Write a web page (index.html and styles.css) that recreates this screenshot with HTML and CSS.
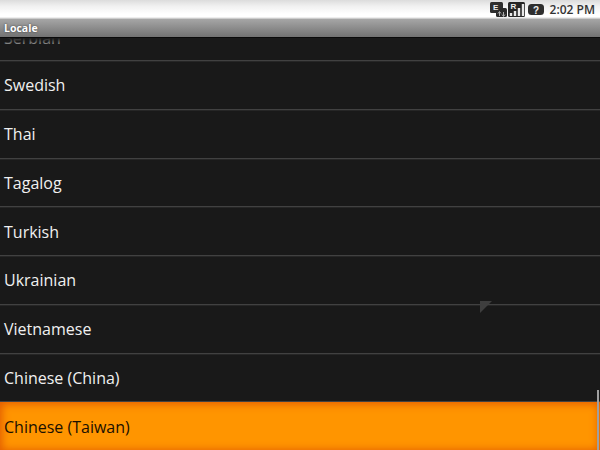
FILE: index.html
```html
<!DOCTYPE html>
<html lang="en">
<head>
<meta charset="utf-8">
<title>Locale</title>
<link rel="stylesheet" href="styles.css">
</head>
<body>
<div class="screen">
  <header class="status">
    <svg class="ico" width="17" height="15" viewBox="0 0 17 15"><rect x="0" y="0" width="13" height="11" rx="1.500" fill="#2e2e2e"/><rect x="6" y="6" width="11" height="9" rx="1.500" fill="#2a2a2a"/><text x="3" y="8" class="ico-t">E</text><path d="M9.500 14v-4M8 11.500l1.500-2 1.500 2M13.500 10v4M12 12.500l1.500 2 1.500-2" stroke="#aaa" fill="none"/></svg>
    <svg class="ico" width="17" height="15" viewBox="0 0 17 15"><rect x="0" y="0" width="17" height="15" rx="1.500" fill="#262626"/><text x="2.500" y="7" class="ico-t">R</text><path d="M3 14v-3M7 14v-5M11 14v-8M15 14v-12" stroke="#e8e8e8" stroke-width="2.400"/></svg>
    <svg class="ico ico-q" width="16" height="11" viewBox="0 0 16 11"><rect width="16" height="11" rx="3.500" fill="#2e2e2e"/><text x="8" y="9.500" text-anchor="middle" class="ico-q-t">?</text></svg>
    <span class="clock">2:02 PM</span>
  </header>
  <div class="titlebar">Locale</div>
  <main class="list">
    <div class="row row-cut"><span>Serbian</span></div>
    <div class="row">Swedish</div>
    <div class="row">Thai</div>
    <div class="row">Tagalog</div>
    <div class="row">Turkish</div>
    <div class="row">Ukrainian</div>
    <div class="row">Vietnamese</div>
    <div class="row">Chinese (China)</div>
    <div class="row row-sel">Chinese (Taiwan)</div>
    <div class="fade"></div>
    <div class="notch"></div>
    <div class="scroll"></div>
  </main>
</div>
</body>
</html>
```
FILE: styles.css
```css
* { box-sizing: border-box; }
html, body { margin: 0; padding: 0; }
body { width: 600px; height: 450px; overflow: hidden; background: #191919; font-family: "Open Sans", "Noto Sans", sans-serif; }
.screen { width: 600px; height: 450px; display: flex; flex-direction: column; overflow: hidden; }
.status { height: 19px; flex: none; display: flex; align-items: center; justify-content: flex-end; gap: 1px; padding-right: 5px; background: linear-gradient(#dcdcdc 0, #f0f0f0 6px, #fff 14px, #fff 17px, #bbb 19px); }
.ico { display: block; }
.ico-q { margin: 0 5px 1px 2px; }
.ico-t { font: bold 8px "Liberation Sans", sans-serif; fill: #eee; }
.ico-q-t { font: bold 10px "Liberation Sans", sans-serif; fill: #eee; }
.clock { font-size: 12px; font-weight: 600; color: #333; line-height: 19px; }
.titlebar { height: 19px; flex: none; padding-left: 4px; background: linear-gradient(#a6a6a6, #727272); border-bottom: 1px solid #0a0a0a; color: #fff; font-size: 10.500px; font-weight: 700; line-height: 18px; text-shadow: 0 0 2px #333; }
.list { position: relative; flex: 1; min-height: 0; overflow: hidden; background: #191919; }
.row { height: 48.750px; flex: none; padding: 1px 0 0 4px; display: flex; align-items: center; color: #f0f0f0; font-size: 16px; border-bottom: 1px solid #414141; box-shadow: 0 1px 0 #262626; }
.row-cut { height: 23px; padding-top: 0; align-items: flex-end; overflow: hidden; }
.row-cut span { display: block; margin-bottom: 11px; line-height: 22px; }
.row-sel { height: 50px; padding-top: 0; border-bottom: 0; color: #1a1000; background: #ff9500; box-shadow: inset 0 0 9px 2px #e25c00; }
.fade { position: absolute; left: 0; top: 0; right: 0; height: 9px; background: linear-gradient(#191919, rgba(25,25,25,0.2)); }
.notch { position: absolute; left: 480px; top: 263px; width: 0; height: 0; border-style: solid; border-width: 12px 12px 0 0; border-color: #3e3e3e transparent transparent transparent; }
.scroll { position: absolute; left: 597px; top: 352px; width: 2px; height: 60px; background: #a0a0a0; }
```
